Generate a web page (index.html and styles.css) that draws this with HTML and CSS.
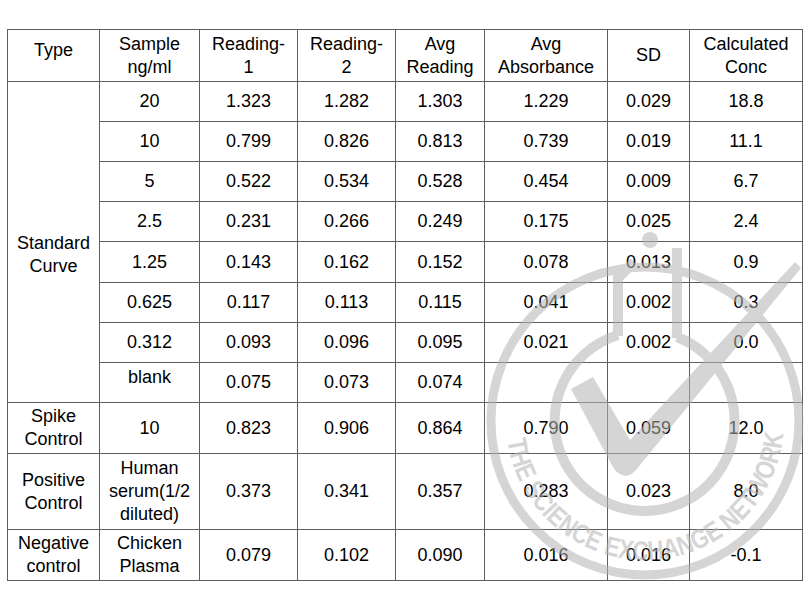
FILE: index.html
```html
<!DOCTYPE html>
<html>
<head>
<meta charset="utf-8">
<link rel="stylesheet" href="styles.css">
</head>
<body>
<table class="data">
  <colgroup>
    <col class="c-type"><col class="c-sample"><col class="c-r1"><col class="c-r2"><col class="c-avg"><col class="c-abs"><col class="c-sd"><col class="c-conc">
  </colgroup>
  <thead>
    <tr class="h-head">
      <th class="type-h">Type</th><th>Sample<br>ng/ml</th><th>Reading-<br>1</th><th>Reading-<br>2</th><th>Avg<br>Reading</th><th>Avg<br>Absorbance</th><th>SD</th><th>Calculated<br>Conc</th>
    </tr>
  </thead>
  <tbody>
    <tr class="h-std"><td rowspan="8" class="group">Standard<br>Curve</td><td>20</td><td>1.323</td><td>1.282</td><td>1.303</td><td>1.229</td><td>0.029</td><td>18.8</td></tr>
    <tr class="h-std"><td>10</td><td>0.799</td><td>0.826</td><td>0.813</td><td>0.739</td><td>0.019</td><td>11.1</td></tr>
    <tr class="h-std"><td>5</td><td>0.522</td><td>0.534</td><td>0.528</td><td>0.454</td><td>0.009</td><td>6.7</td></tr>
    <tr class="h-std"><td>2.5</td><td>0.231</td><td>0.266</td><td>0.249</td><td>0.175</td><td>0.025</td><td>2.4</td></tr>
    <tr class="h-std1"><td>1.25</td><td>0.143</td><td>0.162</td><td>0.152</td><td>0.078</td><td>0.013</td><td>0.9</td></tr>
    <tr class="h-std"><td>0.625</td><td>0.117</td><td>0.113</td><td>0.115</td><td>0.041</td><td>0.002</td><td>0.3</td></tr>
    <tr class="h-std"><td>0.312</td><td>0.093</td><td>0.096</td><td>0.095</td><td>0.021</td><td>0.002</td><td>0.0</td></tr>
    <tr class="h-std"><td class="blank">blank</td><td>0.075</td><td>0.073</td><td>0.074</td><td></td><td></td><td></td></tr>
    <tr class="h-two"><td>Spike<br>Control</td><td>10</td><td>0.823</td><td>0.906</td><td>0.864</td><td>0.790</td><td>0.059</td><td>12.0</td></tr>
    <tr class="h-three"><td>Positive<br>Control</td><td>Human<br>serum(1/2<br>diluted)</td><td>0.373</td><td>0.341</td><td>0.357</td><td>0.283</td><td>0.023</td><td>8.0</td></tr>
    <tr class="h-two"><td>Negative<br>control</td><td>Chicken<br>Plasma</td><td>0.079</td><td>0.102</td><td>0.090</td><td>0.016</td><td>0.016</td><td>-0.1</td></tr>
  </tbody>
</table>

<svg class="watermark" width="810" height="610" viewBox="0 0 810 610" aria-hidden="true">
  <defs>
    <path id="wm-arc" d="M506 421 A139 139 0 0 0 784 421"/>
  </defs>
  <g class="wm-strokes">
    <circle cx="645" cy="421" r="154"/>
    <path d="M618 335 A90 90 0 1 0 677 337"/>
    <path d="M618 336 V278 L634 262"/>
    <path d="M677 338 V248"/>
  </g>
  <g class="wm-fill">
    <circle cx="650" cy="240" r="8"/>
    <path d="M571 389 L593 377 L630 440 L795 262 L801 268 L636 470 Q625 482 614 469 Z"/>
    <text class="wm-text"><textPath href="#wm-arc" startOffset="19" textLength="405" lengthAdjust="spacingAndGlyphs">THE SCIENCE EXCHANGE NETWORK</textPath></text>
  </g>
</svg>
</body>
</html>
```

FILE: styles.css
```css
html, body {
  margin: 0;
  padding: 0;
  background: #ffffff;
}

body {
  position: relative;
  width: 810px;
  height: 610px;
  overflow: hidden;
  font-family: "Liberation Sans", Arial, Helvetica, sans-serif;
  font-size: 18px;
  color: #000000;
}

.data {
  border-collapse: collapse;
  table-layout: fixed;
  width: 795px;
  margin: 29px 0 0 7px;
}

.c-type { width: 92px; }
.c-sample { width: 100px; }
.c-r1 { width: 98px; }
.c-r2 { width: 98px; }
.c-avg { width: 89px; }
.c-abs { width: 123px; }
.c-sd { width: 82px; }
.c-conc { width: 113px; }

.data th,
.data td {
  border: 1px solid #5e5e5e;
  padding: 0;
  text-align: center;
  vertical-align: middle;
  line-height: 23px;
  font-weight: normal;
  white-space: nowrap;
}

.data th.type-h {
  padding-bottom: 11px;
}

.h-head { height: 52px; }
.h-std { height: 40px; }
.h-std1 { height: 41px; }
.h-two { height: 51px; }
.h-three { height: 76px; }

.data td.group {
  padding-top: 26px;
}

.data td.blank {
  vertical-align: top;
  padding-top: 3px;
}

.watermark {
  position: absolute;
  left: 0;
  top: 0;
  pointer-events: none;
  opacity: 0.55;
}

.wm-strokes {
  fill: none;
  stroke: #b4b4b4;
  stroke-width: 10;
}

.wm-strokes circle {
  stroke-width: 9;
}

.wm-fill {
  fill: #b4b4b4;
}

.wm-text {
  font-family: "Liberation Sans", Arial, sans-serif;
  font-size: 27px;
  font-weight: 700;
}
```
